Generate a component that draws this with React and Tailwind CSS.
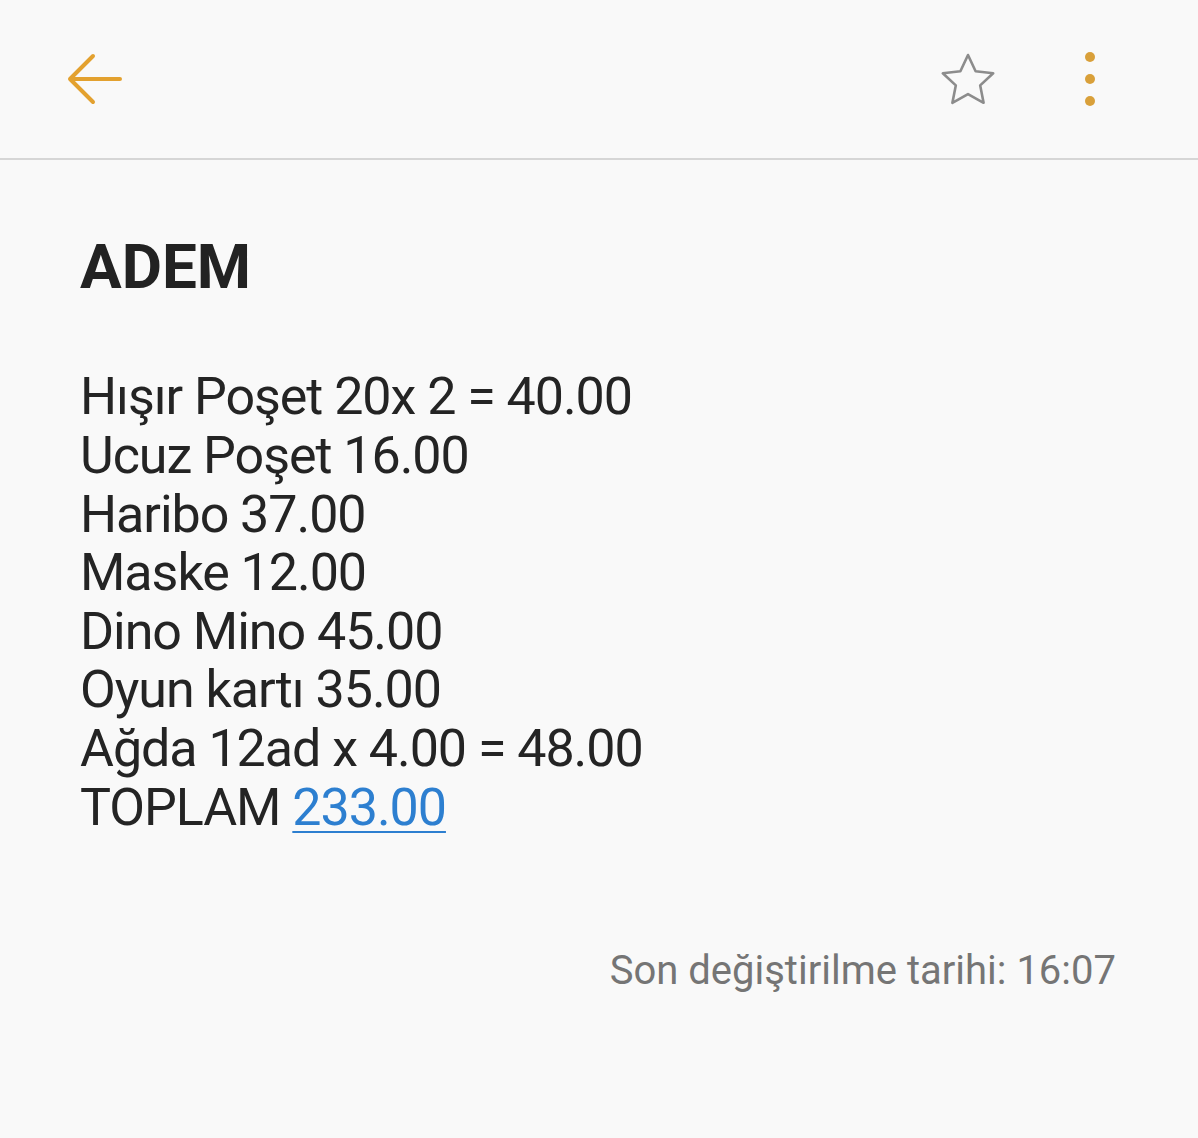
import React from "react";

const items = [
  "Hışır Poşet 20x 2 = 40.00",
  "Ucuz Poşet 16.00",
  "Haribo 37.00",
  "Maske 12.00",
  "Dino Mino 45.00",
  "Oyun kartı 35.00",
  "Ağda 12ad x 4.00 = 48.00",
];

const App = () => {
  return (
    <div
      className="min-h-[1138px] bg-[#f9f9f9] text-[#242424]"
      style={{ fontFamily: "Roboto, 'Noto Sans', sans-serif" }}
    >
      <header className="flex h-[160px] items-center justify-between border-b-2 border-[#d6d6d6] pl-[66px] pr-[103px]">
        <svg width="56" height="52" viewBox="0 0 56 52" fill="none">
          <path
            d="M54 26H4M27 3L4 26l23 23"
            stroke="#e3a12f"
            strokeWidth="4"
            strokeLinecap="round"
            strokeLinejoin="round"
          />
        </svg>
        <div className="flex items-center gap-[88px]">
          <svg width="58" height="54" viewBox="0 0 58 54" fill="none">
            <path
              d="M29 3l7.6 16.2 17.6 2.1-13 12.1 3.4 17.4L29 42.1l-15.6 8.7 3.4-17.4-13-12.1 17.6-2.1z"
              stroke="#8c8c8c"
              strokeWidth="2.6"
              strokeLinejoin="round"
            />
          </svg>
          <div className="flex flex-col gap-[12px]">
            <span className="block h-[10px] w-[10px] rounded-full bg-[#d9a03a]" />
            <span className="block h-[10px] w-[10px] rounded-full bg-[#d9a03a]" />
            <span className="block h-[10px] w-[10px] rounded-full bg-[#d9a03a]" />
          </div>
        </div>
      </header>

      <main className="px-[80px]">
        <h1 className="mt-[70px] text-[62px] font-bold leading-[1.2] text-[#222]">ADEM</h1>
        <div className="mt-[64px] text-[52px] leading-[58.6px] tracking-[-0.02em]">
          {items.map((t) => (
            <p key={t}>{t}</p>
          ))}
          <p>
            TOPLAM{" "}
            <span className="text-[#2d7fd0] underline decoration-2 underline-offset-[6px]">233.00</span>
          </p>
        </div>
        <p className="mt-[110px] text-right pr-[2px] text-[40px] leading-[1.2] text-[#757575]">
          Son değiştirilme tarihi: 16:07
        </p>
      </main>
    </div>
  );
};

export default App;
